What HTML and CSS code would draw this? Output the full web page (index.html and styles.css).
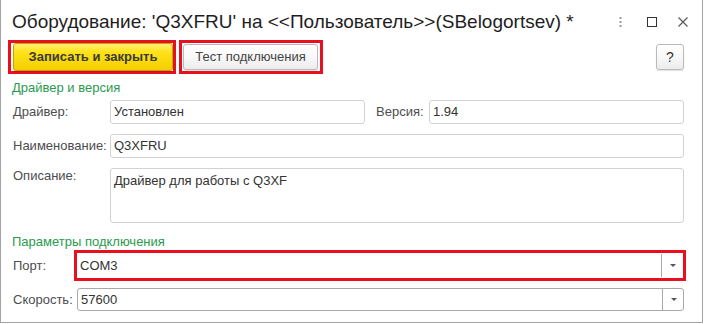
FILE: index.html
```html
<!DOCTYPE html>
<html lang="ru">
<head>
<meta charset="utf-8">
<title>Оборудование</title>
<link rel="stylesheet" href="styles.css">
</head>
<body>
<div class="window">
  <header class="titlebar">
    <h1 class="title">Оборудование: 'Q3XFRU' на &lt;&lt;Пользователь&gt;&gt;(SBelogortsev) *</h1>
    <div class="win-ctrls">
      <svg class="ic-dots" width="3" height="10" viewBox="0 0 3 10"><rect x="0.5" y="0" width="2" height="2" fill="#9a9a9a"/><rect x="0.5" y="4" width="2" height="2" fill="#9a9a9a"/><rect x="0.5" y="8" width="2" height="2" fill="#9a9a9a"/></svg>
      <svg class="ic-max" width="10" height="10" viewBox="0 0 10 10"><rect x="0.5" y="0.5" width="9" height="9" fill="none" stroke="#333" stroke-width="1"/></svg>
      <svg class="ic-close" width="10" height="10" viewBox="0 0 10 10"><path d="M0.5 0.5 L9.5 9.5 M9.5 0.5 L0.5 9.5" stroke="#555" stroke-width="1.1" fill="none"/></svg>
    </div>
  </header>

  <div class="toolbar">
    <div class="hl hl-first"><button class="btn btn-primary">Записать и закрыть</button></div>
    <div class="hl hl-second"><button class="btn btn-default">Тест подключения</button></div>
    <button class="btn btn-help">?</button>
  </div>

  <section class="group">
    <div class="group-title">Драйвер и версия</div>
    <div class="form-main">
      <label class="lbl">Драйвер:</label>
      <div class="field">Установлен</div>
      <label class="lbl lbl-inline">Версия:</label>
      <div class="field">1.94</div>

      <label class="lbl">Наименование:</label>
      <div class="field field-wide">Q3XFRU</div>

      <label class="lbl lbl-top">Описание:</label>
      <div class="field field-wide field-area">Драйвер для работы с Q3XF</div>
    </div>
  </section>

  <section class="group group-conn">
    <div class="group-title">Параметры подключения</div>
    <div class="form-conn">
      <label class="lbl">Порт:</label>
      <div class="combo combo-hl">
        <span class="combo-val">COM3</span>
        <span class="combo-btn"><span class="arrow"></span></span>
      </div>
      <label class="lbl">Скорость:</label>
      <div class="combo">
        <span class="combo-val">57600</span>
        <span class="combo-btn"><span class="arrow"></span></span>
      </div>
    </div>
  </section>
</div>
</body>
</html>
```

FILE: styles.css
```css
* { box-sizing: border-box; }
html, body { margin: 0; padding: 0; background: #fff; }
body {
  font-family: "Liberation Sans", Arial, sans-serif;
  font-size: 13px;
  line-height: 16px;
  color: #333;
}
.window {
  width: 703px;
  height: 323px;
  border: 1px solid #a3a3a3;
  border-top: none;
  padding: 0 17px 0 11px;
  background: #fff;
}
.titlebar {
  height: 40px;
  display: flex;
  align-items: flex-start;
  padding-top: 12px;
}
.title {
  margin: 0;
  font-weight: normal;
  font-size: 19px;
  line-height: 20px;
  color: #1e1e1e;
  flex: 1;
  white-space: nowrap;
}
.win-ctrls {
  display: flex;
  align-items: center;
  height: 10px;
  margin-top: 5px;
  margin-right: -3px;
}
.ic-dots { margin-right: 25px; }
.ic-max { margin-right: 21px; }
.toolbar {
  display: flex;
  align-items: center;
  height: 34px;
  margin-left: -4px;
}
.hl {
  border: 3px solid #e8101f;
  height: 34px;
  display: flex;
  align-items: center;
}
.hl-first { padding: 0 0 0 2px; }
.hl-second { padding: 0 2px 0 1px; margin-left: 3px; }
.btn {
  font-family: "Liberation Sans", Arial, sans-serif;
  font-size: 13px;
  line-height: 16px;
  border-radius: 3px;
  padding: 0;
  cursor: default;
}
.btn-primary {
  width: 160px;
  height: 28px;
  font-weight: bold;
  color: #3a3a3a;
  background: linear-gradient(#fff07a 0%, #ffe21a 30%, #f3cf00 100%);
  border: 1px solid #c4a500;
  box-shadow: 0 1px 1px rgba(0,0,0,0.15);
}
.btn-default {
  width: 135px;
  height: 26px;
  color: #444;
  background: linear-gradient(#ffffff 0%, #f8f8f8 50%, #ececec 100%);
  border: 1px solid #b9b9b9;
  box-shadow: 0 1px 1px rgba(0,0,0,0.12);
}
.btn-help {
  margin-left: auto;
  margin-right: 1px;
  width: 28px;
  height: 26px;
  font-size: 14px;
  color: #333;
  background: linear-gradient(#ffffff 0%, #f8f8f8 50%, #ececec 100%);
  border: 1px solid #b9b9b9;
  box-shadow: 0 1px 1px rgba(0,0,0,0.12);
}
.group-title {
  color: #2a9a4e;
  height: 16px;
  margin-top: 6px;
}
.form-main {
  display: grid;
  grid-template-columns: 98px 255px 64px 1fr;
  grid-template-rows: 24px 24px 55px;
  row-gap: 10px;
  margin-top: 4px;
  margin-right: 1px;
}
.lbl {
  color: #4d4d4d;
  display: flex;
  align-items: center;
  padding-left: 1px;
  white-space: nowrap;
}
.lbl-inline { padding-left: 11px; }
.lbl-top { align-items: flex-start; }
.field {
  border: 1px solid #d2d2d2;
  border-radius: 3px;
  padding: 0 3px;
  display: flex;
  align-items: center;
  color: #333;
  background: #fff;
}
.field-wide { grid-column: 2 / 5; }
.field-area {
  align-items: flex-start;
  padding-top: 4px;
}
.group-conn .group-title { margin-top: 11px; }
.form-conn {
  display: grid;
  grid-template-columns: 65px 1fr;
  grid-template-rows: 31px 23px;
  row-gap: 7px;
  margin-right: 1px;
}
.combo {
  border: 1px solid #a9a9a9;
  border-radius: 3px;
  display: flex;
  align-items: stretch;
  background: #fff;
}
.combo-val {
  flex: 1;
  display: flex;
  align-items: center;
  padding-left: 3px;
  color: #333;
}
.combo-btn {
  width: 21px;
  border-left: 1px solid #a9a9a9;
  display: flex;
  align-items: center;
  justify-content: center;
}
.arrow {
  width: 0;
  height: 0;
  border-left: 3px solid transparent;
  border-right: 3px solid transparent;
  border-top: 3px solid #555;
  margin-left: 1px;
}
.combo-hl {
  border: 3px solid #e8101f;
  border-radius: 0;
  margin: 0 -2px 0 -3px;
}
.combo-hl .combo-btn {
  margin: 1px 0;
  width: 22px;
}
```
